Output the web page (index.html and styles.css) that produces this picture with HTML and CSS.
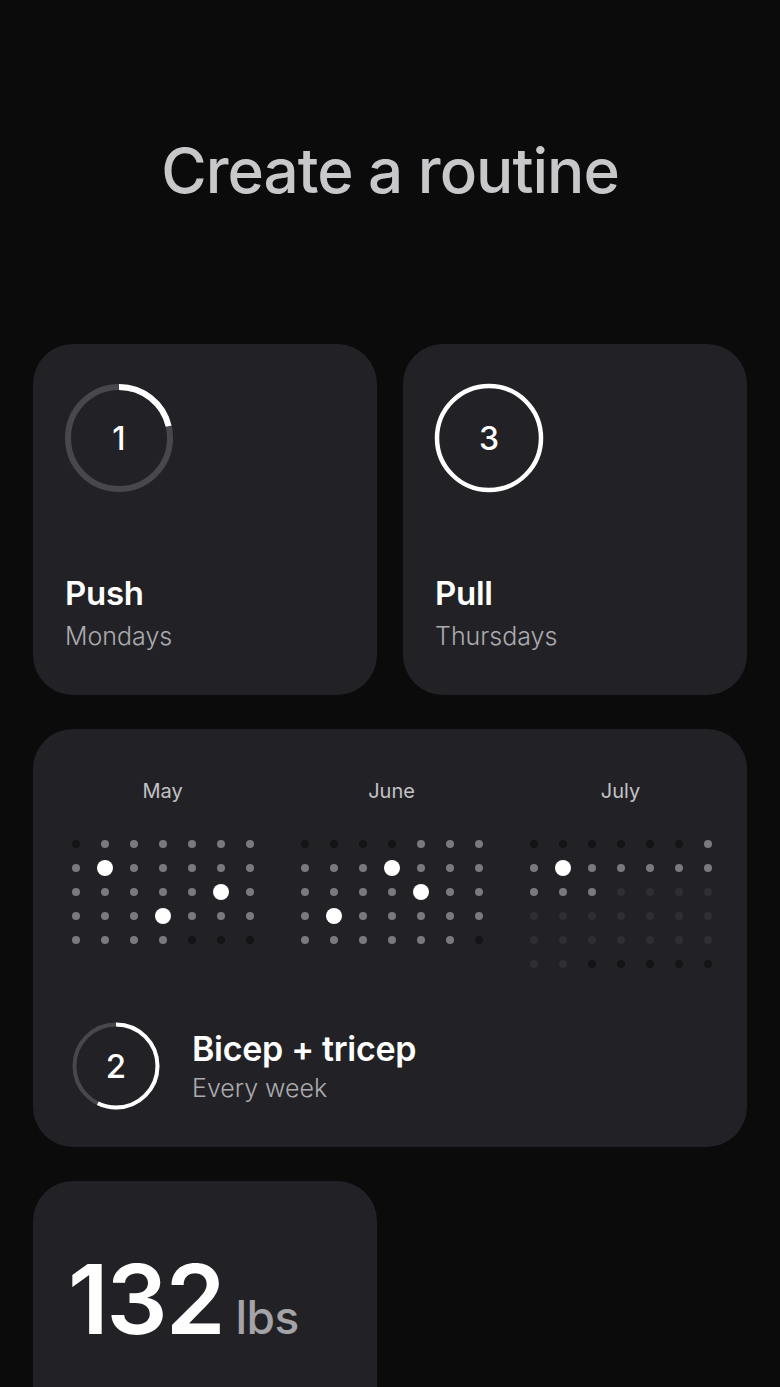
FILE: index.html
```html
<!DOCTYPE html>
<html>
<head>
<meta charset="utf-8">
<link rel="stylesheet" href="styles.css">
</head>
<body>
<div class="page">
  <h1 class="title">Create a routine</h1>

  <div class="row">
    <div class="card small">
      <div class="ring ring-lg">
        <svg viewBox="0 0 110 110" width="110" height="110">
          <circle cx="55" cy="55" r="51" class="track" stroke-width="6"/>
          <circle cx="55" cy="55" r="51" class="arc" stroke-width="6" stroke-dasharray="68 400" transform="rotate(-90 55 55)"/>
        </svg>
        <span class="num">1</span>
      </div>
      <div class="info">
        <div class="name">Push</div>
        <div class="sub">Mondays</div>
      </div>
    </div>
    <div class="card small">
      <div class="ring ring-lg">
        <svg viewBox="0 0 110 110" width="110" height="110">
          <circle cx="55" cy="55" r="52" class="arc" stroke-width="4.5"/>
        </svg>
        <span class="num">3</span>
      </div>
      <div class="info">
        <div class="name">Pull</div>
        <div class="sub">Thursdays</div>
      </div>
    </div>
  </div>

  <div class="card wide">
    <div class="months">
      <div class="month">
        <div class="mlabel">May</div>
        <div class="grid">
          <i class="x"></i><i></i><i></i><i></i><i></i><i></i><i></i>
          <i></i><i class="b"></i><i></i><i></i><i></i><i></i><i></i>
          <i></i><i></i><i></i><i></i><i></i><i class="b"></i><i></i>
          <i></i><i></i><i></i><i class="b"></i><i></i><i></i><i></i>
          <i></i><i></i><i></i><i></i><i class="x"></i><i class="x"></i><i class="x"></i>
        </div>
      </div>
      <div class="month">
        <div class="mlabel">June</div>
        <div class="grid">
          <i class="x"></i><i class="x"></i><i class="x"></i><i class="x"></i><i></i><i></i><i></i>
          <i></i><i></i><i></i><i class="b"></i><i></i><i></i><i></i>
          <i></i><i></i><i></i><i></i><i class="b"></i><i></i><i></i>
          <i></i><i class="b"></i><i></i><i></i><i></i><i></i><i></i>
          <i></i><i></i><i></i><i></i><i></i><i></i><i class="x"></i>
        </div>
      </div>
      <div class="month">
        <div class="mlabel">July</div>
        <div class="grid">
          <i class="x"></i><i class="x"></i><i class="x"></i><i class="x"></i><i class="x"></i><i class="x"></i><i></i>
          <i></i><i class="b"></i><i></i><i></i><i></i><i></i><i></i>
          <i></i><i></i><i></i><i class="f"></i><i class="f"></i><i class="f"></i><i class="f"></i>
          <i class="f"></i><i class="f"></i><i class="f"></i><i class="f"></i><i class="f"></i><i class="f"></i><i class="f"></i>
          <i class="f"></i><i class="f"></i><i class="f"></i><i class="f"></i><i class="f"></i><i class="f"></i><i class="f"></i>
          <i class="f"></i><i class="f"></i><i class="x"></i><i class="x"></i><i class="x"></i><i class="x"></i><i class="x"></i>
        </div>
      </div>
    </div>
    <div class="routine">
      <div class="ring ring-md">
        <svg viewBox="0 0 88 88" width="88" height="88">
          <circle cx="44" cy="44" r="41.5" class="track" stroke-width="4"/>
          <circle cx="44" cy="44" r="41.5" class="arc" stroke-width="4" stroke-dasharray="149 400" transform="rotate(-90 44 44)"/>
        </svg>
        <span class="num">2</span>
      </div>
      <div class="info2">
        <div class="name">Bicep + tricep</div>
        <div class="sub">Every week</div>
      </div>
    </div>
  </div>

  <div class="row">
    <div class="card small weight">
      <div class="value"><span class="big">132</span><span class="unit">lbs</span></div>
    </div>
  </div>
</div>
</body>
</html>
```

FILE: styles.css
```css
html, body {
  margin: 0;
  padding: 0;
  background: #0b0b0c;
  height: 1387px;
  overflow: hidden;
}
body {
  font-family: Inter, "Noto Sans", sans-serif;
  color: #fff;
}
.page {
  padding: 0 33px;
}
.title {
  margin: 0;
  padding-top: 133px;
  height: 344px;
  box-sizing: border-box;
  text-align: center;
  font-size: 62px;
  line-height: 76px;
  font-weight: 500;
  letter-spacing: -1px;
  color: #c8c8cb;
}
.row {
  display: flex;
  gap: 26px;
}
.card {
  background: #222226;
  border-radius: 40px;
  box-sizing: border-box;
}
.small {
  width: 344px;
  height: 351px;
  padding: 39px 31px 0;
}
.ring {
  position: relative;
  display: flex;
  align-items: center;
  justify-content: center;
}
.ring svg {
  position: absolute;
  left: 0;
  top: 0;
}
.ring-lg { width: 110px; height: 110px; }
.ring-md { width: 88px; height: 88px; flex: none; }
.track { fill: none; stroke: #48484c; }
.arc { fill: none; stroke: #ffffff; stroke-linecap: butt; }
.num {
  position: relative;
  font-size: 32px;
  font-weight: 500;
  color: #fff;
}
.ring-md .num { font-size: 33px; }
.info {
  margin-top: 80px;
  padding-left: 1px;
}
.name {
  font-size: 33px;
  line-height: 40px;
  font-weight: 600;
  letter-spacing: -0.3px;
  color: #fff;
}
.sub {
  font-size: 25px;
  line-height: 32px;
  font-weight: 300;
  color: #ababaf;
  margin-top: 7px;
}
.wide {
  margin: 34px 0;
  height: 418px;
  padding: 50px 26px 0 28px;
}
.months {
  display: flex;
  gap: 26px;
  align-items: flex-start;
  height: 243px;
}
.month {
  width: 203px;
}
.mlabel {
  text-align: center;
  font-size: 20px;
  line-height: 24px;
  font-weight: 400;
  color: #c2c2c6;
  margin-bottom: 29px;
}
.grid {
  display: grid;
  grid-template-columns: repeat(7, 29px);
  grid-auto-rows: 24px;
}
.grid i {
  display: block;
  width: 8px;
  height: 8px;
  border-radius: 50%;
  background: #7a7a7e;
  justify-self: center;
  align-self: center;
}
.grid i.x { background: #141416; }
.grid i.f { background: #2f2f33; }
.grid i.b {
  width: 16px;
  height: 16px;
  background: #ffffff;
}
.routine {
  display: flex;
  align-items: center;
  gap: 32px;
  padding-left: 11px;
}
.info2 .name { font-size: 34px; }
.info2 .sub { margin-top: 3px; }
.weight {
  height: 206px;
  border-radius: 40px 40px 0 0;
  padding: 68px 35px 0;
}
.value {
  display: flex;
  align-items: baseline;
  gap: 12px;
}
.big {
  font-size: 96px;
  line-height: 100px;
  font-weight: 600;
  letter-spacing: -2px;
  color: #fff;
}
.unit {
  font-size: 46px;
  font-weight: 500;
  color: #a3a3a8;
  letter-spacing: -0.5px;
}
```
